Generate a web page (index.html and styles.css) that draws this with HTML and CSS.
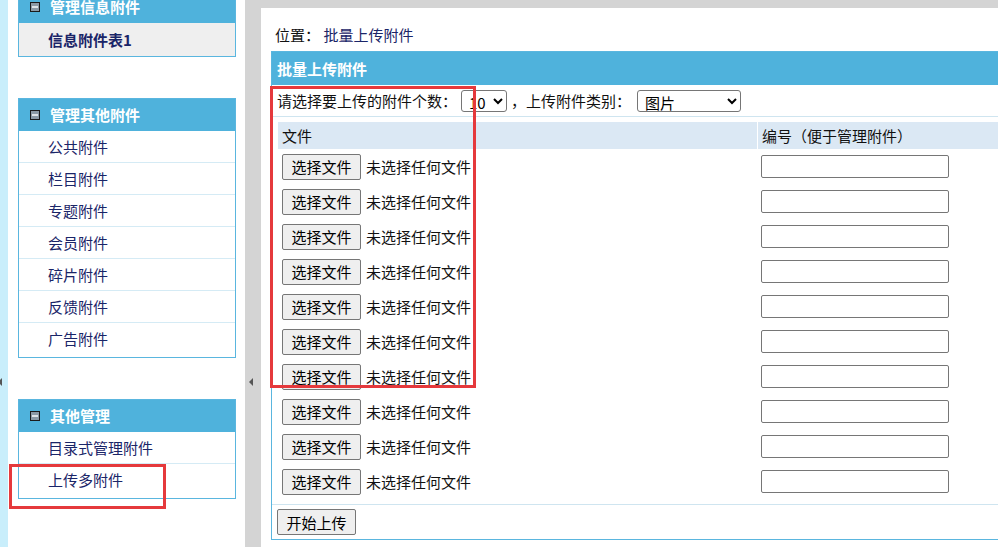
FILE: index.html
```html
<!DOCTYPE html>
<html lang="zh-CN">
    <head>
        <meta charset="UTF-8" />
        <title>批量上传附件</title>
        <link rel="stylesheet" href="styles.css">
    </head>
    <body>
        <div class="strip"><span class="strip-arrow"></span></div>

        <div class="sidebar">
            <div class="panel first">
                <div class="panel-head">
                    <svg class="fold" width="10" height="10" viewBox="0 0 10 10"><rect x="0.5" y="0.5" width="9" height="9" fill="#8c9aa6" stroke="#1b1b1b"/><rect x="2" y="4" width="6" height="2" fill="#dfe4e8"/></svg>
                    管理信息附件
                </div>
                <div class="panel-item current">信息附件表1</div>
            </div>

            <div class="panel">
                <div class="panel-head">
                    <svg class="fold" width="10" height="10" viewBox="0 0 10 10"><rect x="0.5" y="0.5" width="9" height="9" fill="#8c9aa6" stroke="#1b1b1b"/><rect x="2" y="4" width="6" height="2" fill="#dfe4e8"/></svg>
                    管理其他附件
                </div>
                <div class="panel-item">公共附件</div>
                <div class="panel-item">栏目附件</div>
                <div class="panel-item">专题附件</div>
                <div class="panel-item">会员附件</div>
                <div class="panel-item">碎片附件</div>
                <div class="panel-item">反馈附件</div>
                <div class="panel-item">广告附件</div>
            </div>

            <div class="panel">
                <div class="panel-head">
                    <svg class="fold" width="10" height="10" viewBox="0 0 10 10"><rect x="0.5" y="0.5" width="9" height="9" fill="#8c9aa6" stroke="#1b1b1b"/><rect x="2" y="4" width="6" height="2" fill="#dfe4e8"/></svg>
                    其他管理
                </div>
                <div class="panel-item">目录式管理附件</div>
                <div class="panel-item">上传多附件</div>
            </div>
        </div>

        <div class="divider"><span class="divider-arrow"></span></div>

        <div class="main">
            <div class="content">
                <div class="position">位置：&nbsp;<span class="here">批量上传附件</span></div>

                <div class="box">
                    <div class="box-head">批量上传附件</div>
                    <div class="opts">
                        请选择要上传的附件个数：
                        <select class="sel-num">
                            <option>1</option>
                            <option>5</option>
                            <option selected>10</option>
                        </select>
                        <span class="sep">，上传附件类别：</span>
                        <select class="sel-type">
                            <option selected>图片</option>
                            <option>Flash</option>
                            <option>多媒体</option>
                            <option>其他附件</option>
                        </select>
                    </div>
                    <div class="files">
                        <div class="file-row file-head">
                            <div class="col-file">文件</div>
                            <div class="col-no">编号（便于管理附件）</div>
                        </div>
                        <div id="fileRows"></div>
                    </div>
                    <div class="actions">
                        <button class="btn">开始上传</button>
                    </div>
                </div>
            </div>
        </div>

        <!-- annotation boxes -->
        <div class="mark mark-form"></div>
        <div class="mark mark-menu"></div>

        <script>
            const fileRows = document.getElementById("fileRows");
            for (let i = 0; i < 10; i++) {
                const row = document.createElement("div");
                row.className = "file-row";
                row.innerHTML =
                    '<div class="col-file"><button class="btn">选择文件</button><span class="none">未选择任何文件</span></div>' +
                    '<div class="col-no"><input type="text" class="txt"></div>';
                fileRows.appendChild(row);
            }
        </script>
    </body>
</html>
```

FILE: styles.css
```css
html,
body {
    height: 100%;
    overflow: hidden;
}
body {
    margin: 0;
    display: flex;
    font-family: "Noto Sans CJK SC", "Microsoft YaHei", sans-serif;
    font-size: 15px;
    color: #111;
    position: relative;
}
.strip {
    width: 8px;
    flex: none;
    background: #c9eefb;
    position: relative;
}
.strip-arrow {
    position: absolute;
    left: -2px;
    top: 378px;
    border-top: 4px solid transparent;
    border-bottom: 4px solid transparent;
    border-right: 4px solid #555;
}
.sidebar {
    width: 218px;
    flex: none;
    background: #fff;
    padding: 0 9px 0 10px;
}
.panel {
    border: 1px solid #5ab6df;
    margin-top: 41px;
    padding-bottom: 3px;
}
.panel.first {
    margin-top: -10px;
    padding-bottom: 0;
}
.panel-head {
    height: 32px;
    line-height: 32px;
    background: #4fb2dc;
    color: #fff;
    font-weight: bold;
    padding-left: 11px;
    display: flex;
    align-items: center;
    gap: 10px;
}
.fold {
    flex: none;
}
.panel-item {
    height: 31px;
    line-height: 31px;
    padding-left: 29px;
    color: #1a2568;
    border-bottom: 1px solid #d5ebf5;
}
.panel-item:last-child {
    border-bottom: none;
}
.panel-item.current {
    height: 33px;
    line-height: 33px;
    background: #efefef;
    font-weight: bold;
}
.divider {
    width: 16px;
    flex: none;
    background: #d4d4d4;
    position: relative;
}
.divider-arrow {
    position: absolute;
    left: 4px;
    top: 378px;
    border-top: 4px solid transparent;
    border-bottom: 4px solid transparent;
    border-right: 4px solid #555;
}
.main {
    flex: 1;
    background: #d4d4d4;
    padding-top: 8px;
    min-width: 0;
}
.content {
    background: #fff;
    height: 100%;
    padding-left: 10px;
    width: 800px;
}
.position {
    padding: 17px 0 0 4px;
    line-height: 20px;
    margin-bottom: 6px;
}
.here {
    color: #1a2568;
}
.box {
    border: 1px solid #5ab6df;
    width: 780px;
}
.box-head {
    height: 33px;
    line-height: 33px;
    background: #4fb2dc;
    color: #fff;
    font-weight: bold;
    padding-left: 5px;
}
.opts {
    height: 31px;
    display: flex;
    align-items: center;
    padding-left: 5px;
    border-bottom: 1px solid #cfe5f0;
    white-space: nowrap;
}
select {
    font-family: inherit;
    font-size: 15px;
    height: 22px;
    padding: 0 0 0 3px;
    border: 1px solid #767676;
    border-radius: 3px;
    background: #fff;
    color: #000;
}
.sel-num {
    width: 46px;
    margin-left: 4px;
}
.sep {
    margin-left: 4px;
}
.sel-type {
    width: 104px;
    margin-left: 6px;
}
.files {
    padding: 5px 6px 5px 6px;
    border-bottom: 1px solid #cfe5f0;
}
.file-row {
    display: flex;
    height: 35px;
    align-items: center;
}
.file-row.file-head {
    height: 27px;
    background: #dbe8f4;
}
.col-file {
    width: 475px;
    padding-left: 4px;
    flex: none;
    display: flex;
    align-items: center;
}
.col-no {
    flex: 1;
    padding-left: 4px;
    align-self: stretch;
    display: flex;
    align-items: center;
}
.file-head .col-no {
    border-left: 1px solid #fff;
    padding-left: 4px;
}
.btn {
    font-family: inherit;
    font-size: 15px;
    width: 79px;
    height: 26px;
    padding: 0;
    background: #efefef;
    border: 1px solid #767676;
    border-radius: 2px;
    color: #000;
}
.none {
    margin-left: 5px;
}
.txt {
    width: 188px;
    height: 23px;
    box-sizing: border-box;
    border: 1px solid #767676;
    border-radius: 2px;
    padding: 0 3px;
}
.actions {
    padding: 4px 5px 4px;
}
.mark {
    position: absolute;
    border: 3px solid #e5393c;
    box-sizing: border-box;
}
.mark-form {
    left: 270px;
    top: 86px;
    width: 206px;
    height: 302px;
}
.mark-menu {
    left: 9px;
    top: 464px;
    width: 157px;
    height: 45px;
}
```
